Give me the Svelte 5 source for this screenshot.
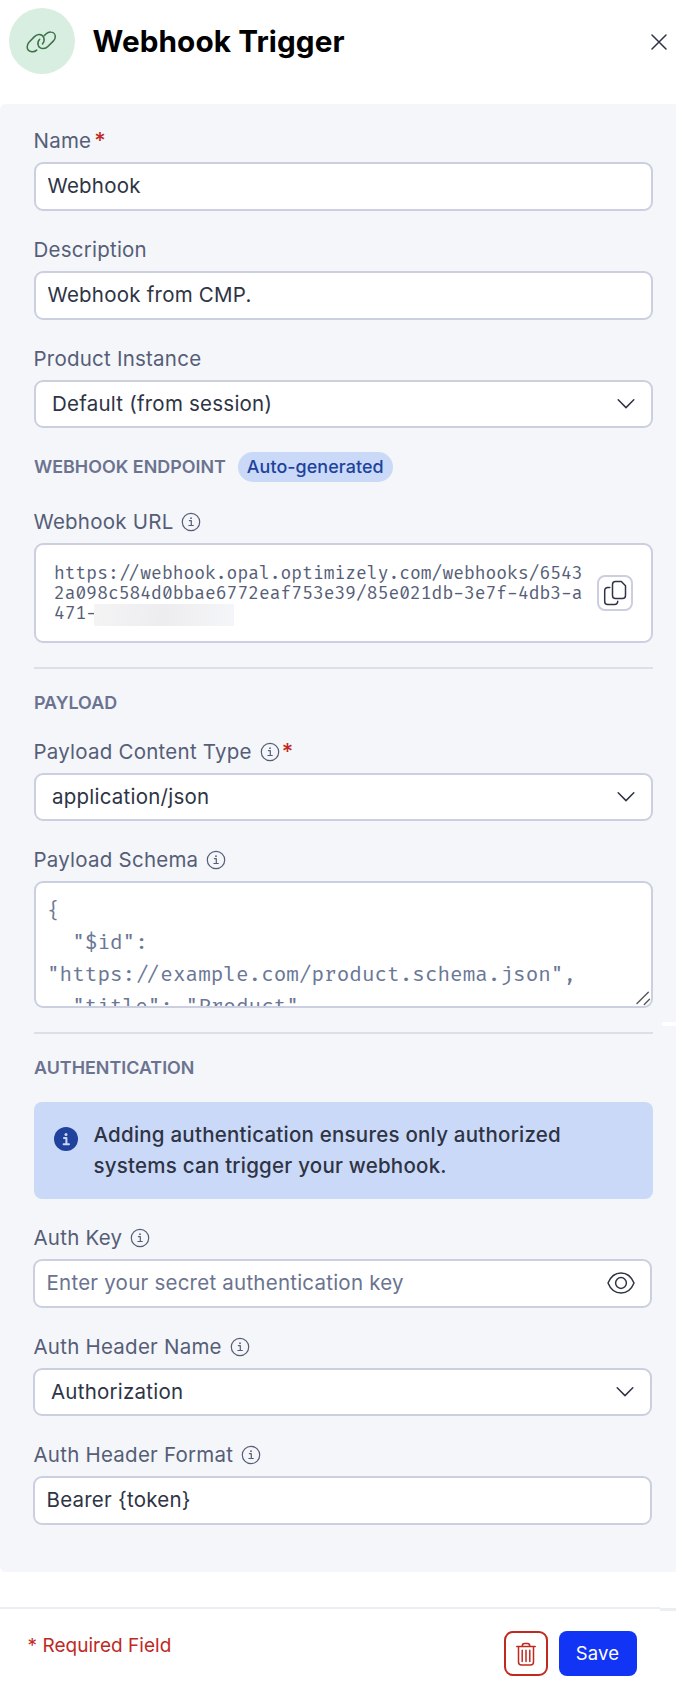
<script lang="ts">
  let name = "Webhook";
  let description = "Webhook from CMP.";
  let authKey = "";
  let headerFormat = "Bearer {token}";

  const webhookUrl =
    "https://webhook.opal.optimizely.com/webhooks/65432a098c584d0bbae6772eaf753e39/85e021db-3e7f-4db3-a471-";

  const schemaLines = [
    "{",
    '  "$id":',
    '"https://example.com/product.schema.json",',
    '  "title": "Product",',
  ];
</script>

{#snippet info()}
  <svg class="info" viewBox="0 0 20 20" width="20" height="20">
    <circle cx="10" cy="10" r="8.7" />
    <path d="M8.4 8.6h1.9v4.8M7.9 13.5h4.4" />
    <circle class="dot" cx="10" cy="6.2" r="0.9" />
  </svg>
{/snippet}

{#snippet select(value: string)}
  <div class="control select">
    <span>{value}</span>
    <svg viewBox="0 0 18 12" width="18" height="12">
      <path d="M1.2 1.8 9 9.6l7.8-7.8" />
    </svg>
  </div>
{/snippet}

<div class="drawer">
  <header>
    <div class="avatar">
      <svg viewBox="0 0 32 24" width="32" height="24">
        <path d="M10.7 21.1C9 22.6 7.4 23 5.7 22.7C2.9 22.3 1.2 20.3 1.2 18C1.2 16.3 1.7 14.6 3 13.2L8.2 7.9C9.8 6.3 11.5 5.5 13.3 5.6C15.4 5.7 17.1 6.9 17.8 8.8C18.5 11 18.1 13.2 16.5 15" />
        <path d="M18.3 6.6L20.2 4.8C21.6 3.5 23.2 3 24.8 3.1C27.4 3.2 29.3 5.1 29.3 7.5C29.3 9.1 28.7 10.7 27.5 11.9L22.1 17.3C20.7 18.8 19 19.7 17.1 19.6C14.7 19.5 12.9 18.2 12.2 16.2C11.5 14 12.1 11.9 13.7 10.3" />
      </svg>
    </div>
    <h1>Webhook Trigger</h1>
    <button class="close" aria-label="Close">
      <svg viewBox="0 0 16 16" width="16" height="16">
        <path d="M1 1l14 14M15 1L1 15" />
      </svg>
    </button>
  </header>

  <main>
    <div class="field">
      <label for="name">Name<span class="required">*</span></label>
      <input id="name" class="control" bind:value={name} />
    </div>
    <div class="field">
      <label for="description">Description</label>
      <input id="description" class="control" bind:value={description} />
    </div>
    <div class="field">
      <div class="label">Product Instance</div>
      {@render select("Default (from session)")}
    </div>

    <div class="heading endpoint">
      <h2>WEBHOOK ENDPOINT</h2>
      <span class="badge">Auto-generated</span>
    </div>

    <div class="field">
      <div class="label">Webhook URL {@render info()}</div>
      <div class="control url">
        <code>{webhookUrl}<span class="redacted"></span></code>
        <button class="copy" aria-label="Copy">
          <svg viewBox="0 0 24 26" width="24" height="26">
            <path d="M12.5 1.5h5.8l4.2 4.2v9.8a3 3 0 0 1-3 3h-7a3 3 0 0 1-3-3v-11a3 3 0 0 1 3-3z" />
            <path d="M6.8 7.5H4.7a3 3 0 0 0-3 3v11a3 3 0 0 0 3 3h7a3 3 0 0 0 3-3v-.3" />
          </svg>
        </button>
      </div>
    </div>

    <hr />
    <h2 class="heading">PAYLOAD</h2>

    <div class="field">
      <div class="label">
        Payload Content Type {@render info()}<span class="required">*</span>
      </div>
      {@render select("application/json")}
    </div>
    <div class="field">
      <div class="label">Payload Schema {@render info()}</div>
      <div class="control schema">
        {#each schemaLines as line}
          <div>{line}</div>
        {/each}
        <svg class="grip" viewBox="0 0 16 16" width="16" height="16">
          <path d="M2 13.5L13.3 2.2M9.3 14.5L14.5 9.3" />
        </svg>
      </div>
    </div>

    <hr />
    <h2 class="heading auth">AUTHENTICATION</h2>

    <div class="alert">
      <svg viewBox="0 0 24 24" width="24" height="24">
        <circle cx="12" cy="12" r="12" />
        <path d="M10 11h2.4v5.8M9.6 17.2h5.4" />
        <circle class="dot" cx="12" cy="7.5" r="1.5" />
      </svg>
      <p>Adding authentication ensures only authorized systems can trigger your webhook.</p>
    </div>

    <div class="field shifted">
      <label for="auth-key">Auth Key {@render info()}</label>
      <div class="control password">
        <input id="auth-key" placeholder="Enter your secret authentication key" bind:value={authKey} />
        <svg viewBox="0 0 28 22" width="28" height="22">
          <path d="M1 11C3.5 4.9 8.4 1 14 1s10.5 3.9 13 10c-2.5 6.1-7.4 10-13 10S3.5 17.1 1 11z" />
          <circle cx="14" cy="11" r="5.4" />
        </svg>
      </div>
    </div>
    <div class="field shifted">
      <div class="label">Auth Header Name {@render info()}</div>
      {@render select("Authorization")}
    </div>
    <div class="field shifted">
      <label for="format">Auth Header Format {@render info()}</label>
      <input id="format" class="control" bind:value={headerFormat} />
    </div>

    <span class="scroll-mark"></span>
  </main>

  <footer>
    <span class="note">* Required Field</span>
    <button class="delete" aria-label="Delete">
      <svg viewBox="0 0 20 24" width="20" height="24">
        <path d="M.8 4.5h18.4M6.2 4.2c0-1.8.9-2.7 2.4-2.7h2.8c1.5 0 2.4.9 2.4 2.7M2.5 4.5v15.5a3 3 0 0 0 3 3h9a3 3 0 0 0 3-3V4.5" />
        <path d="M6.2 8.2v11.2M10 8.2v11.2M13.8 8.2v11.2" />
      </svg>
    </button>
    <button class="save">Save</button>
  </footer>
</div>

<style>
:global(body) {
  background: #fff;
}

.drawer {
  width: 676px;
  height: 1692px;
  overflow: hidden;
  display: flex;
  flex-direction: column;
  font-family: Inter, sans-serif;
  font-size: 20.5px;
  letter-spacing: 0.23px;
  color: #2e3445;
}

.drawer * {
  box-sizing: border-box;
}

svg {
  fill: none;
  stroke: currentColor;
  stroke-width: 1.5;
  stroke-linecap: round;
  stroke-linejoin: round;
  flex: none;
}

button {
  display: flex;
  align-items: center;
  justify-content: center;
  padding: 0;
  border: 0;
  background: none;
  font: inherit;
  letter-spacing: inherit;
  color: inherit;
}

header {
  height: 104px;
  padding: 8px 9px 30px;
  display: flex;
  align-items: center;
}

.avatar {
  width: 66px;
  height: 66px;
  padding-right: 1px;
  border-radius: 50%;
  background: #d7eee1;
  color: #3c7048;
  display: flex;
  align-items: center;
  justify-content: center;
}

h1 {
  margin: 0 auto 0 17.5px;
  font-size: 29.7px;
  font-weight: 700;
  letter-spacing: 0.1px;
  color: #000;
}

.close {
  margin-top: 1px;
}

main {
  position: relative;
  height: 1468px;
  padding: 24px 23px 0 34px;
  background: #f4f6fa;
  border-radius: 6px 0 0 6px;
}

.field + .field,
.alert + .field {
  margin-top: 26px;
}

label,
.label {
  display: flex;
  align-items: center;
  height: 26px;
  margin: 0 0 8px -0.5px;
  line-height: 26px;
  color: #565e77;
}

.info {
  margin: 0 0 0 8px;
  stroke-width: 1.2;
}

.dot {
  fill: currentColor;
  stroke: none;
}

.required {
  margin: -2px 0 0 3px;
  font-size: 22px;
  font-weight: 500;
  color: #c0291f;
}

.info + .required {
  margin-left: 2px;
}

.control {
  display: flex;
  align-items: center;
  width: 619px;
  height: 49px;
  padding: 0 11.5px 2px;
  border: 2px solid #cccfe0;
  border-radius: 9px;
  background: #fff;
  font: inherit;
  letter-spacing: inherit;
  color: inherit;
}

.shifted .control {
  margin-left: -1px;
}

.select {
  justify-content: space-between;
  height: 48px;
  padding: 0 16px 1px;
}

.select svg {
  margin-top: 1px;
}

.heading {
  height: 24px;
  margin: 22px 0 24px;
  line-height: 24px;
}

h2 {
  margin: 0;
  font-size: 17.9px;
  font-weight: 600;
  letter-spacing: 0;
  color: #6b7390;
}

.endpoint {
  display: flex;
  align-items: center;
  gap: 12px;
  height: 30px;
  margin: 24px 0 27px;
}

.auth {
  margin-bottom: 22px;
}

.badge {
  padding: 0 9px;
  border-radius: 16px;
  background: #cad9f7;
  color: #20429c;
  font-size: 17.9px;
  font-weight: 500;
  line-height: 30px;
  letter-spacing: 0.08px;
}

.url {
  height: 100px;
  padding: 0 18px;
  justify-content: space-between;
}

code {
  width: 532px;
  padding-top: 1px;
  font: 17.55px/20px "Fira Code", "Liberation Mono", monospace;
  color: #565e77;
  word-break: break-all;
}

.redacted {
  position: absolute;
  width: 140px;
  height: 22px;
  margin-left: -3px;
  background: linear-gradient(100deg, #f4f4f5, #ededef 50%, #f5f6f9);
}

.copy {
  width: 36px;
  height: 36px;
  border: 2px solid #cccfe0;
  border-radius: 8px;
}

hr {
  margin: 24px 0 0;
  border: 0;
  height: 2px;
  background: #dbdfec;
}

.schema {
  position: relative;
  display: block;
  height: 127px;
  padding: 12px 11px 0;
  overflow: hidden;
  font: 20.48px/32px "Fira Code", "Liberation Mono", monospace;
  white-space: pre;
  color: #6b7796;
}

.url,
.schema {
  letter-spacing: 0;
}

.grip {
  position: absolute;
  right: 0;
  bottom: 0;
  color: #5c5c5c;
}

.alert {
  display: flex;
  gap: 15.5px;
  height: 97px;
  padding: 18px 20px;
  border-radius: 8px;
  background: #cad9f7;
}

.alert svg {
  margin-top: 7px;
  fill: #20429c;
  stroke: #cad9f7;
  stroke-width: 2;
}

.alert svg > circle:first-child {
  stroke: none;
}

.alert .dot {
  fill: #cad9f7;
}

.alert path {
  fill: none;
}

p {
  margin: 0;
  font-weight: 500;
  line-height: 30.5px;
}

.password {
  padding-right: 15px;
}

.password input {
  flex: 1;
  padding: 0;
  border: 0;
  font: inherit;
  letter-spacing: inherit;
}

.password input::placeholder {
  color: #6b7390;
}

.scroll-mark {
  position: absolute;
  right: 0;
  top: 918px;
  width: 14px;
  height: 4px;
  background: #fff;
}

footer {
  position: relative;
  display: flex;
  align-items: flex-start;
  height: 85px;
  margin-top: 35px;
  padding: 22px 39.5px 0 27.5px;
  border-top: 2px solid #ebeef5;
}

footer::after {
  content: "";
  position: absolute;
  right: 0;
  top: -2px;
  width: 16px;
  height: 3px;
  border-top: 1px solid #fff;
  background: #ebeef5;
}

.note {
  margin-right: auto;
  color: #c0291f;
  font-size: 19px;
  line-height: 30px;
  letter-spacing: 0.03px;
}

.delete {
  width: 44px;
  height: 45px;
  margin-right: 11px;
  border: 2px solid #c0291f;
  border-radius: 9px;
  color: #c0291f;
}

.save {
  width: 78px;
  height: 45px;
  padding-bottom: 1px;
  border-radius: 8px;
  background: #1235f5;
  color: #fff;
  font-size: 18.5px;
}
</style>
